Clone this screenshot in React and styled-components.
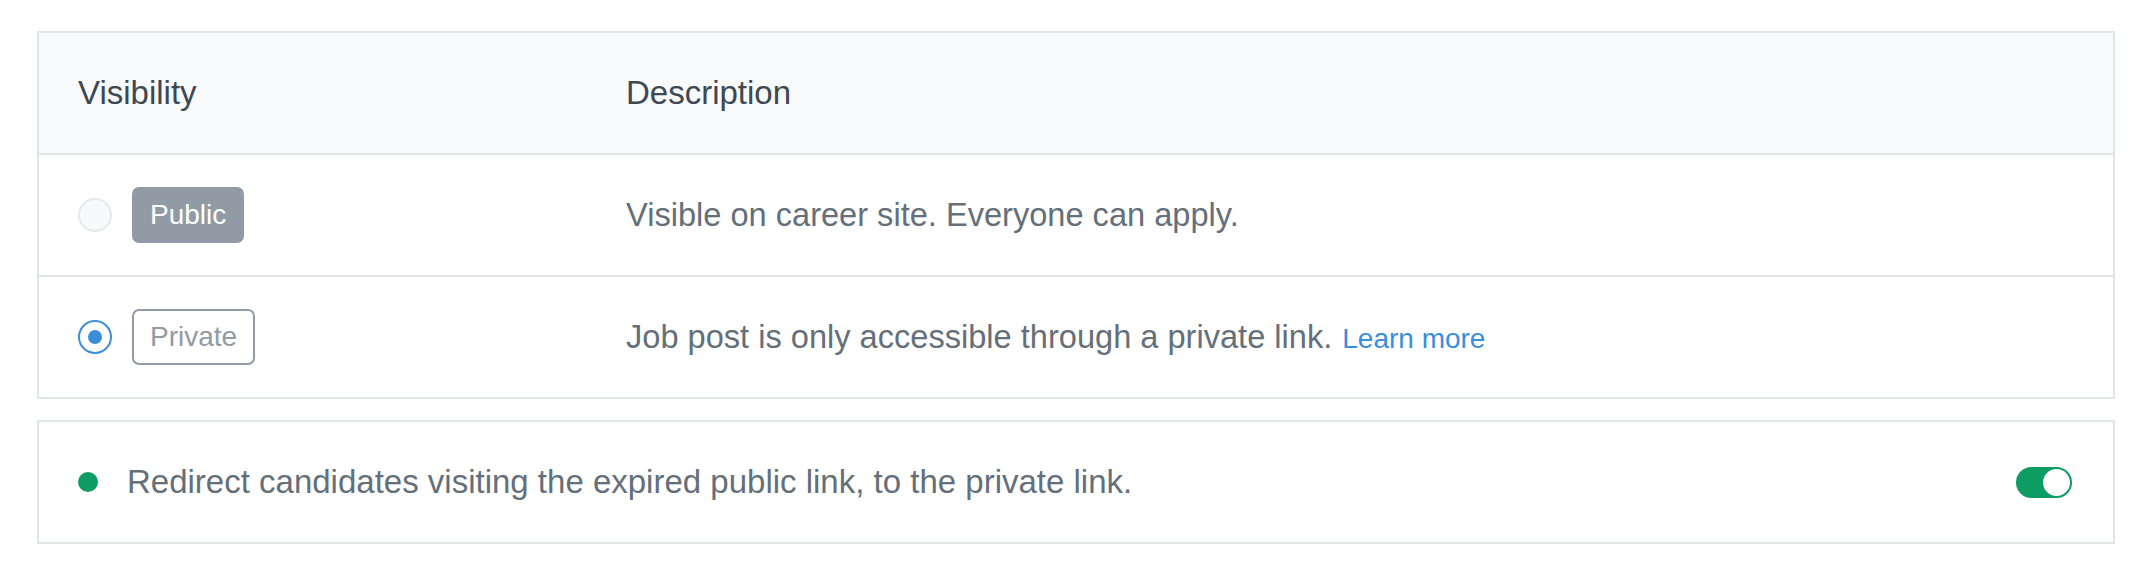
import styled, { createGlobalStyle } from 'styled-components';

const Global = createGlobalStyle`
  body {
    margin: 0;
    background: #fff;
    font-family: "Liberation Sans", Arial, sans-serif;
  }
`;

const Page = styled.div`
  padding: 31px 35px 0 37px;
  display: flex;
  flex-direction: column;
  gap: 21px;
`;

const Table = styled.div`
  border: 2px solid #e3e6e9;
  display: flex;
  flex-direction: column;
`;

const Row = styled.div`
  display: grid;
  grid-template-columns: 548px 1fr;
  align-items: center;
  height: 120px;
  padding-left: 39px;
  background: ${(p) => (p.head ? '#f9fafb' : '#fff')};
  & + & {
    border-top: 2px solid #e3e6e9;
  }
`;

const HeadCell = styled.div`
  font-size: 33px;
  color: #3e4853;
`;

const Choice = styled.div`
  display: flex;
  align-items: center;
  gap: 20px;
`;

const Radio = styled.span`
  width: 34px;
  height: 34px;
  box-sizing: border-box;
  border-radius: 50%;
  border: 2px solid ${(p) => (p.checked ? '#3b8ed9' : '#e6e8ea')};
  background: ${(p) => (p.checked ? '#fff' : '#f8f9fa')};
  display: flex;
  align-items: center;
  justify-content: center;
  &::after {
    content: '';
    display: ${(p) => (p.checked ? 'block' : 'none')};
    width: 14px;
    height: 14px;
    border-radius: 50%;
    background: #3b8ed9;
  }
`;

const Badge = styled.span`
  box-sizing: border-box;
  height: 56px;
  padding: 0 16px;
  display: inline-flex;
  align-items: center;
  border-radius: 7px;
  font-size: 28px;
  border: 2px solid #909ba6;
  background: ${(p) => (p.solid ? '#909ba6' : '#fff')};
  color: ${(p) => (p.solid ? '#fff' : '#909ba6')};
`;

const Desc = styled.div`
  font-size: 32.6px;
  color: #646f7a;
`;

const Link = styled.a`
  font-size: 28px;
  color: #3b8ed9;
  text-decoration: none;
  margin-left: 10px;
`;

const Box = styled.div`
  border: 2px solid #e3e6e9;
  height: 120px;
  display: flex;
  align-items: center;
  padding: 0 41px 0 39px;
`;

const Dot = styled.span`
  width: 20px;
  height: 20px;
  border-radius: 50%;
  background: #0d9d63;
  margin-right: 29px;
  flex-shrink: 0;
`;

const BoxText = styled.div`
  flex: 1;
  font-size: 33px;
  color: #646f7a;
`;

const Toggle = styled.span`
  width: 56px;
  height: 31px;
  box-sizing: border-box;
  border-radius: 16px;
  background: #0d9d63;
  display: flex;
  align-items: center;
  justify-content: flex-end;
  padding: 2px;
  &::after {
    content: '';
    width: 27px;
    height: 27px;
    border-radius: 50%;
    background: #fff;
  }
`;

export default function App() {
  return (
    <>
      <Global />
      <Page>
        <Table>
          <Row head>
            <HeadCell>Visibility</HeadCell>
            <HeadCell>Description</HeadCell>
          </Row>
          <Row>
            <Choice>
              <Radio />
              <Badge solid>Public</Badge>
            </Choice>
            <Desc>Visible on career site. Everyone can apply.</Desc>
          </Row>
          <Row>
            <Choice>
              <Radio checked />
              <Badge>Private</Badge>
            </Choice>
            <Desc>
              Job post is only accessible through a private link.
              <Link href="#">Learn more</Link>
            </Desc>
          </Row>
        </Table>
        <Box>
          <Dot />
          <BoxText>Redirect candidates visiting the expired public link, to the private link.</BoxText>
          <Toggle />
        </Box>
      </Page>
    </>
  );
}
